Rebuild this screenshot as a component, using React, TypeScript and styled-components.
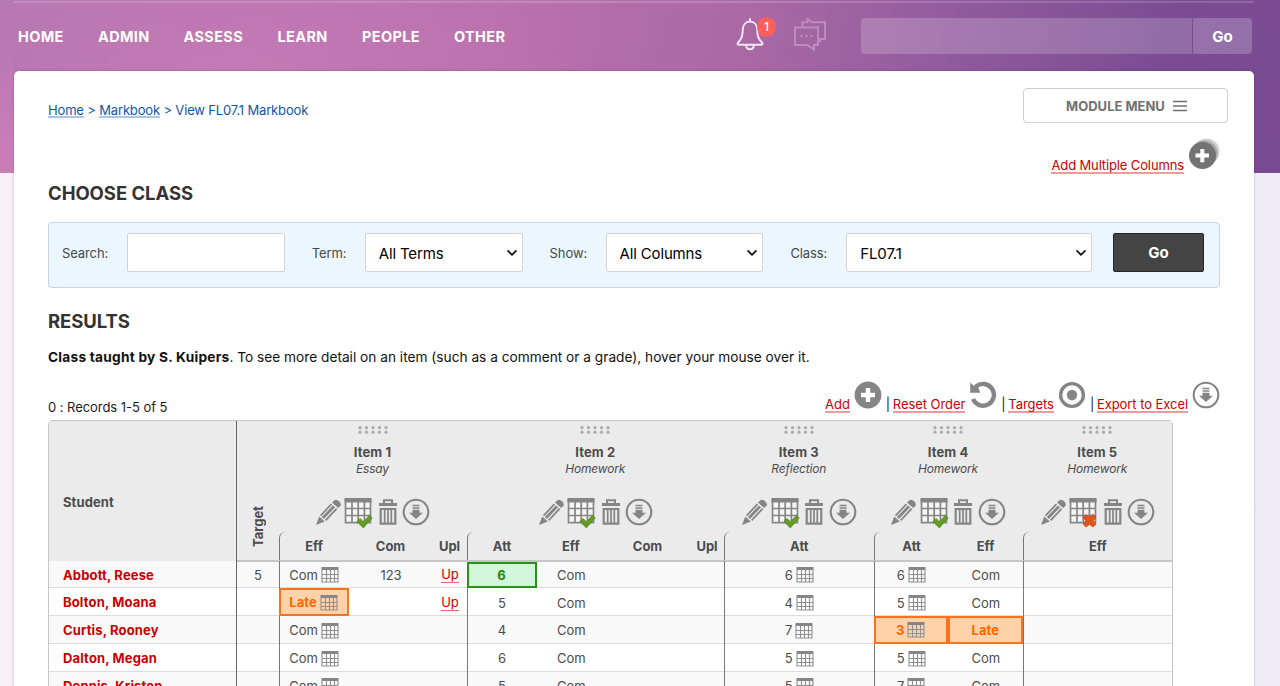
import React from 'react';
import styled, { createGlobalStyle, css } from 'styled-components';

const Global = createGlobalStyle`
  * { box-sizing: border-box; }
  html, body { margin: 0; padding: 0; }
  body { font-family: Inter, "Liberation Sans", sans-serif; font-size: 13px; color: #1b1b1b; overflow: hidden; }
`;

const Page = styled.div`
  height: 686px;
  overflow: hidden;
  padding: 1px 26px 0 14px;
  background:
    radial-gradient(ellipse 340px 190px at 230px 90px, rgba(203, 124, 184, 0.55), rgba(203, 124, 184, 0)) 0 0 / 100% 173px no-repeat,
    linear-gradient(0deg, rgba(208, 128, 185, 0.8) 0%, rgba(208, 128, 185, 0) 80%) 0 0 / 14px 173px no-repeat,
    linear-gradient(102deg, #b577b2 0%, #bb76b1 20%, #b971ad 40%, #a968a4 58%, #8f5a9d 74%, #7b4c94 89%, #784a92 100%) 0 0 / 100% 173px no-repeat,
    linear-gradient(90deg, #f9f0f7 0%, #f0ecf3 100%);
`;

const Header = styled.header`
  height: 70px;
  border-top: 2px solid rgba(255, 255, 255, 0.16);
  display: flex;
  align-items: center;
  padding: 0 2px 2px 4px;
`;

const Nav = styled.nav`
  display: flex;
  flex: 1;
`;

const NavItem = styled.a<{ $w: number }>`
  width: ${(p) => p.$w}px;
  color: #fff;
  font-size: 14.5px;
  font-weight: 700;
  letter-spacing: 0.35px;
  white-space: nowrap;
`;

const Alerts = styled.div`
  display: flex;
  width: 126px;
  height: 36px;
  gap: 28px;
`;

const BellWrap = styled.div`
  position: relative;
  width: 30px;
  height: 36px;
`;

const Badge = styled.span`
  position: absolute;
  left: 22px;
  top: -1px;
  width: 19px;
  height: 20px;
  border-radius: 10px;
  background: #fa5f5c;
  color: #fff;
  font-size: 12px;
  font-weight: 500;
  line-height: 20px;
  text-align: center;
`;

const GlobalSearch = styled.div`
  display: flex;
  width: 391px;
  height: 36px;
  border-radius: 4px;
  overflow: hidden;
`;

const SearchField = styled.div`
  flex: 1;
  background: rgba(255, 255, 255, 0.19);
  border-right: 1px solid rgba(110, 60, 140, 0.65);
`;

const SearchGo = styled.button`
  width: 59px;
  border: 0;
  padding: 0;
  background: rgba(255, 255, 255, 0.21);
  color: #fff;
  font: 700 15px Inter, sans-serif;
`;

const Main = styled.main`
  height: 620px;
  background: #fff;
  border-radius: 5px 5px 0 0;
  padding: 17px 26px 0 34px;
  box-shadow: 0 0 3px rgba(70, 20, 90, 0.28);
`;

const TopRow = styled.div`
  display: flex;
  justify-content: space-between;
  height: 36px;
`;

const Crumbs = styled.div`
  color: #0f56a8;
  font-size: 13px;
  line-height: 18px;
  padding-top: 13px;
  letter-spacing: -0.16px;
`;

const CrumbLink = styled.a`
  display: inline-block;
  height: 17px;
  line-height: 18px;
  border-bottom: 2px solid #a9c6e4;
  vertical-align: top;
`;

const ModuleMenu = styled.button`
  width: 205px;
  height: 35px;
  border: 1px solid #cfcfcf;
  border-radius: 4px;
  background: #fff;
  color: #707070;
  font: 700 13px Inter, sans-serif;
  display: flex;
  align-items: center;
  justify-content: center;
  gap: 8px;
  padding: 0 5px 0 7px;
`;

const AddColumns = styled.div`
  display: flex;
  justify-content: flex-end;
  height: 48px;
  padding: 14px 8px 0 0;
  gap: 4px;
`;

const RedLink = styled.a<{ $thin?: boolean }>`
  color: #c00;
  border-bottom: ${(p) => (p.$thin ? '1px solid #df6b6b' : '2px solid #ec9c9c')};
  line-height: 17px;
  height: 17px;
  white-space: nowrap;
`;

const LowLink = styled(RedLink)`
  margin-top: 19px;
  letter-spacing: -0.13px;
`;

const Heading = styled.h2`
  margin: 0;
  font-size: 18.5px;
  font-weight: 700;
  color: #333;
  line-height: 24px;
  height: 24px;
  letter-spacing: -0.05px;
`;

const ClassHeading = styled(Heading)`
  margin-top: 9px;
`;

const ResultsHeading = styled(Heading)`
  margin-top: 21px;
`;

const Filter = styled.form`
  margin: 17px 8px 0 0;
  height: 66px;
  border: 1px solid #ccd3d8;
  border-radius: 4px;
  background: #ebf6ff;
  padding: 10px 15px 0 13px;
  display: flex;
  font-size: 13px;
`;

const FieldLabel = styled.label<{ $w: number }>`
  width: ${(p) => p.$w}px;
  line-height: 40px;
  color: #484848;
  letter-spacing: -0.1px;
`;

const Field = styled.div<{ $w: number; $gap: number }>`
  width: ${(p) => p.$w}px;
  margin-right: ${(p) => p.$gap}px;
  height: 39px;
  background: #fff;
  border: 1px solid #d3d3d3;
  border-radius: 2px;
  padding: 1px 5px 0 13px;
  display: flex;
  align-items: center;
  justify-content: space-between;
  font-size: 15px;
  letter-spacing: -0.15px;
  color: #000;
`;

const GoButton = styled.button`
  width: 91px;
  height: 39px;
  border: 1px solid #252525;
  border-radius: 2px;
  background: #444;
  color: #fff;
  font: 700 15px Inter, sans-serif;
`;

const Taught = styled.p`
  margin: 14px 0 0;
  font-size: 13.7px;
  line-height: 20px;
  color: #111;
  b { font-weight: 700; letter-spacing: 0.24px; }
`;

const ListBar = styled.div`
  display: flex;
  justify-content: space-between;
  height: 53px;
  padding: 14px 8px 0 0;
`;

const Records = styled.span`
  padding-top: 17px;
  line-height: 18px;
  letter-spacing: -0.05px;
`;

const Actions = styled.div`
  display: flex;
`;

const ActionIcon = styled.span<{ $m: number }>`
  display: flex;
  height: 28px;
  margin-left: 4px;
  margin-right: ${(p) => p.$m}px;
`;

const ActionLink = styled(RedLink)`
  margin-top: 14px;
  height: 18px;
  line-height: 18px;
  letter-spacing: -0.06px;
`;

const Bar = styled.span`
  width: 7px;
  line-height: 18px;
  margin-top: 14px;
`;

const Table = styled.div`
  width: 1125px;
  border: 1px solid #c6c6c6;
  border-radius: 4px 4px 0 0;
  color: #4c4c4c;
`;

const HeadRow = styled.div`
  display: grid;
  grid-template-columns: 187.5px 42px 188px 257.5px 149.5px 149px 149.5px;
  height: 139.5px;
  background: #ebebeb;
  font-weight: 700;
`;

const StudentHead = styled.div`
  padding: 71px 14px 0;
  line-height: 20px;
  border-right: 1px solid #666;
  letter-spacing: 0.1px;
`;

const TargetHead = styled.div`
  display: flex;
  align-items: flex-end;
  justify-content: center;
  padding-bottom: 13px;
  border-bottom: 2px solid #c6c6c6;
  span { writing-mode: vertical-rl; transform: rotate(180deg); line-height: 18px; }
`;

const ItemHead = styled.div`
  display: flex;
  flex-direction: column;
  align-items: center;
  border-bottom: 2px solid #c6c6c6;
  padding-top: 4.5px;
`;

const ItemName = styled.div`
  margin-top: 9.5px;
  line-height: 18px;
  letter-spacing: 0.1px;
`;

const ItemType = styled.div`
  font-size: 12px;
  font-weight: 400;
  font-style: italic;
  letter-spacing: -0.2px;
  line-height: 15px;
`;

const Tools = styled.div`
  display: flex;
  align-items: center;
  gap: 1.5px;
  height: 30px;
  margin-top: 21px;
`;

const SubHeads = styled.div<{ $cols: string }>`
  display: grid;
  grid-template-columns: ${(p) => p.$cols};
  align-self: stretch;
  flex: 1;
  margin-top: 5px;
  border-left: 1px solid #777;
  border-top-left-radius: 6px;
  text-align: center;
  line-height: 28px;
`;

const Row = styled.div<{ $alt: boolean }>`
  display: grid;
  grid-template-columns: 187.5px 42px 70px 84px 34px 70px 68.5px 85px 34px 149.5px 74.5px 74.5px 149.5px;
  height: 27.8px;
  border-bottom: 1px solid #dcdcdc;
  background: ${(p) => (p.$alt ? '#f9f9f9' : '#fff')};
`;

const NameCell = styled.div`
  color: #c00;
  font-weight: 700;
  padding-left: 14px;
  line-height: 28px;
  border-right: 1px solid #666;
  letter-spacing: 0.15px;
`;

const flags = {
  good: css`background: #d4f6dc; border: 2px solid #269218; color: #1f8a00; font-weight: 700; margin: 1px 0; padding: 0;`,
  late: css`background: #ffd2a9; border: 2px solid #f8731c; color: #ff6600; font-weight: 700; margin: 0 0 0.5px; padding: 0;`,
};

const Cell = styled.div<{ $edge?: boolean; $flag?: 'good' | 'late' }>`
  display: flex;
  align-items: center;
  justify-content: center;
  gap: 3px;
  padding-top: 0.5px;
  border-left: ${(p) => (p.$edge ? '1px solid #777' : '1px solid transparent')};
  ${(p) => p.$flag && flags[p.$flag]}
`;

const G = '#858585';

const Bell = () => (
  <svg width="30" height="36" viewBox="0 0 30 36" fill="none" stroke="#f3e6f3" strokeWidth="2" strokeLinejoin="round" strokeLinecap="round">
    <path d="M15 1v2.500M15 3.500C10.500 3.500 7.700 7.300 7.700 12.500c0 5-1 8.500-4.200 11.500C2 25.500 2.300 26.800 3.700 26.800h22.600c1.400 0 1.700-1.300.2-2.800C23.300 21 22.300 17.500 22.300 12.500 22.300 7.300 19.500 3.500 15 3.500z" />
    <path d="M11.200 27.200c0 2.300 1.500 4 3.800 4s3.800-1.700 3.800-4" />
  </svg>
);

const Chat = () => (
  <svg width="34" height="36" viewBox="0 0 34 36" fill="none" stroke="#bb8dbe" strokeWidth="2">
    <path d="M9.500 9V4.300h5V1l5 3.300H32V21h-5v3" />
    <path d="M2 9.500h23V27h-4v4.800L14.500 27H2z" />
    <path d="M7.300 18h2.200M12.400 18h2.200M17.500 18h2.200" />
  </svg>
);

const Menu = () => (
  <svg width="14" height="12" viewBox="0 0 14 12" stroke="#707070" strokeWidth="1.300">
    <path d="M0 1.500h14M0 6h14M0 10.500h14" />
  </svg>
);

const Chevron = () => (
  <svg width="10" height="8" viewBox="0 0 10 8" fill="none" stroke="#111" strokeWidth="1.700" strokeLinecap="round" strokeLinejoin="round">
    <path d="M1 1.800l4 4 4-4" />
  </svg>
);

const MultiPlus = () => (
  <svg width="32" height="32" viewBox="0 0 32 32">
    <circle cx="18.500" cy="13.500" r="13" fill="#d0d0d0" />
    <circle cx="16.500" cy="15.500" r="13" fill="#a6a6a6" />
    <circle cx="14.500" cy="17.500" r="13.500" fill="#737373" />
    <path d="M12.300 11h4v4.500H21v4h-4.700v4.700h-4v-4.700H7.500v-4h4.800z" fill="#fff" />
  </svg>
);

const Plus = () => (
  <svg width="28" height="28" viewBox="0 0 28 28">
    <circle cx="14" cy="14" r="13.400" fill={G} />
    <path d="M11.800 7h4.400v4.800H21v4.400h-4.800V21h-4.400v-4.800H7v-4.400h4.800z" fill="#fff" />
  </svg>
);

const Reset = () => (
  <svg width="28" height="28" viewBox="0 0 28 28">
    <path d="M7 5.500A10.900 10.900 0 1 1 4 18" fill="none" stroke={G} strokeWidth="4.400" />
    <path d="M1.200 1.500l3.600 3.200L8 3l3.300 8.700H1.200z" fill={G} />
  </svg>
);

const Target = () => (
  <svg width="28" height="28" viewBox="0 0 28 28">
    <circle cx="14" cy="14" r="11.400" fill="none" stroke={G} strokeWidth="3.400" />
    <circle cx="14" cy="14" r="5.200" fill={G} />
  </svg>
);

const Down = () => (
  <svg width="28" height="28" viewBox="0 0 28 28">
    <circle cx="14" cy="14" r="12.300" fill="none" stroke={G} strokeWidth="2.100" />
    <path d="M10.500 7.500h7M10.500 10h7" stroke={G} strokeWidth="1.500" />
    <path d="M10.500 11.700h7v3H21L14 21l-7-6.300h3.500z" fill={G} />
  </svg>
);

const Pencil = () => (
  <svg width="28" height="28" viewBox="0 0 28 28">
    <path d="M19.500 2.200c2.200-2.200 8 3 6 5.500l-2.300 2.400-6.200-5.600z" fill={G} />
    <path d="M15.800 5.500l1.300 1.200L6.300 18.300l-1.300-1.200zM18 7.400l2 1.900L8.900 20.900l-2-1.900zM21 10l1.300 1.200L11.300 22.900 10 21.700z" fill={G} />
    <path d="M4.300 18.500l5.500 5L1 27z" fill={G} />
  </svg>
);

const MarkGrid = ({ done }: { done: boolean }) => (
  <svg width="29" height="32" viewBox="0.500 0 29 32">
    <path d="M1 2.500h27v25H1z" fill="#f6f6f6" />
    <path d="M2 3v23.700h25V3M8.500 6v21M14.700 6v21M20.900 6v21M2 12.500h25M2 19.500h25" fill="none" stroke={G} strokeWidth="1.700" />
    <path d="M1 2h27v4.500H1z" fill={G} />
    {done ? (
      <path d="M13.300 25.500l3.500-3 3 3.200 6.200-6.500 2.800 2.700-9 10z" fill="#659b25" stroke="#4b7b16" strokeWidth=".6" />
    ) : (
      <path d="M14.500 21.300l3-2.800 3.500 2.500 3.500-2.800 3 2.800-2.500 3.700 2.500 3.500-3 2.800-3.500-2.500-3.500 2.500-3-2.800 2.500-3.500z" fill="#e2541b" stroke="#c24413" strokeWidth=".6" />
    )}
  </svg>
);

const SmallGrid = () => (
  <svg width="18" height="17" viewBox="0 0 18 17">
    <path d="M1 4v12h16V4M5.500 4v12M9.500 4v12M13.500 4v12M1 8.500h16M1 12.500h16" fill="none" stroke="#909090" strokeWidth="1.100" />
    <path d="M.500 1h17v3H.500z" fill={G} />
  </svg>
);

const Trash = () => (
  <svg width="26" height="28" viewBox="1 0 26 28">
    <path d="M10 5V2.200h8V5" fill="none" stroke={G} strokeWidth="2" />
    <path d="M5 5h18v3H5z" fill={G} />
    <path d="M6.700 11h14.600v14.600H6.700z" fill="none" stroke={G} strokeWidth="2.200" />
    <path d="M10.700 12v13M14 12v13M17.300 12v13" stroke={G} strokeWidth="1.700" />
  </svg>
);

const Dots = () => (
  <svg width="30" height="8" viewBox="0 0 30 8" fill="#aaa">
    {[2, 8.500, 15, 21.500, 28].map((x) => (
      <React.Fragment key={x}>
        <circle cx={x} cy="1.700" r="1.600" />
        <circle cx={x} cy="6.200" r="1.600" />
      </React.Fragment>
    ))}
  </svg>
);

const nav: [string, number][] = [['HOME', 80], ['ADMIN', 85.5], ['ASSESS', 94], ['LEARN', 84.5], ['PEOPLE', 92], ['OTHER', 60]];

const items = [
  { name: 'Item 1', type: 'Essay', cols: '69px 84px 34px', subs: ['Eff', 'Com', 'Upl'], done: true },
  { name: 'Item 2', type: 'Homework', cols: '69px 68.5px 85px 34px', subs: ['Att', 'Eff', 'Com', 'Upl'], done: true },
  { name: 'Item 3', type: 'Reflection', cols: '1fr', subs: ['Att'], done: true },
  { name: 'Item 4', type: 'Homework', cols: '1fr 1fr', subs: ['Att', 'Eff'], done: true },
  { name: 'Item 5', type: 'Homework', cols: '1fr', subs: ['Eff'], done: false },
];

type Student = { name: string; target?: string; eff1: string; com1?: string; up?: boolean; att2: string; att3: string; att4: string; eff4: string };

const students: Student[] = [
  { name: 'Abbott, Reese', target: '5', eff1: 'Com', com1: '123', up: true, att2: '6', att3: '6', att4: '6', eff4: 'Com' },
  { name: 'Bolton, Moana', eff1: 'Late', up: true, att2: '5', att3: '4', att4: '5', eff4: 'Com' },
  { name: 'Curtis, Rooney', eff1: 'Com', att2: '4', att3: '7', att4: '3', eff4: 'Late' },
  { name: 'Dalton, Megan', eff1: 'Com', att2: '6', att3: '5', att4: '5', eff4: 'Com' },
  { name: 'Dennis, Kristen', eff1: 'Com', att2: '5', att3: '5', att4: '7', eff4: 'Com' },
];

export default function App() {
  return (
    <Page>
      <Global />
      <Header>
        <Nav>{nav.map(([t, w]) => <NavItem key={t} $w={w}>{t}</NavItem>)}</Nav>
        <Alerts>
          <BellWrap><Bell /><Badge>1</Badge></BellWrap>
          <Chat />
        </Alerts>
        <GlobalSearch><SearchField /><SearchGo>Go</SearchGo></GlobalSearch>
      </Header>
      <Main>
        <TopRow>
          <Crumbs><CrumbLink>Home</CrumbLink> &gt; <CrumbLink>Markbook</CrumbLink> &gt; View FL07.1 Markbook</Crumbs>
          <ModuleMenu>MODULE MENU <Menu /></ModuleMenu>
        </TopRow>
        <AddColumns><LowLink>Add Multiple Columns</LowLink><MultiPlus /></AddColumns>
        <ClassHeading>CHOOSE CLASS</ClassHeading>
        <Filter>
          <FieldLabel $w={65}>Search:</FieldLabel>
          <Field $w={158} $gap={27} />
          <FieldLabel $w={53}>Term:</FieldLabel>
          <Field $w={158} $gap={27}>All Terms<Chevron /></Field>
          <FieldLabel $w={56}>Show:</FieldLabel>
          <Field $w={158} $gap={27}>All Columns<Chevron /></Field>
          <FieldLabel $w={56}>Class:</FieldLabel>
          <Field $w={246} $gap={21}>FL07.1<Chevron /></Field>
          <GoButton type="button">Go</GoButton>
        </Filter>
        <ResultsHeading>RESULTS</ResultsHeading>
        <Taught><b>Class taught by S. Kuipers</b>. To see more detail on an item (such as a comment or a grade), hover your mouse over it.</Taught>
        <ListBar>
          <Records>0 : Records 1-5 of 5</Records>
          <Actions>
            <ActionLink>Add</ActionLink><ActionIcon $m={4}><Plus /></ActionIcon><Bar>|</Bar>
            <ActionLink>Reset Order</ActionLink><ActionIcon $m={4}><Reset /></ActionIcon><Bar>|</Bar>
            <ActionLink>Targets</ActionLink><ActionIcon $m={4}><Target /></ActionIcon><Bar>|</Bar>
            <ActionLink>Export to Excel</ActionLink><ActionIcon $m={0}><Down /></ActionIcon>
          </Actions>
        </ListBar>
        <Table>
          <HeadRow>
            <StudentHead>Student</StudentHead>
            <TargetHead><span>Target</span></TargetHead>
            {items.map((it) => (
              <ItemHead key={it.name}>
                <Dots />
                <ItemName>{it.name}</ItemName>
                <ItemType>{it.type}</ItemType>
                <Tools><Pencil /><MarkGrid done={it.done} /><Trash /><Down /></Tools>
                <SubHeads $cols={it.cols}>{it.subs.map((s) => <span key={s}>{s}</span>)}</SubHeads>
              </ItemHead>
            ))}
          </HeadRow>
          {students.map((s, i) => (
            <Row key={s.name} $alt={i % 2 === 0}>
              <NameCell>{s.name}</NameCell>
              <Cell>{s.target}</Cell>
              <Cell $edge $flag={s.eff1 === 'Late' ? 'late' : undefined}>{s.eff1}<SmallGrid /></Cell>
              <Cell>{s.com1}</Cell>
              <Cell>{s.up && <RedLink $thin>Up</RedLink>}</Cell>
              <Cell $edge $flag={i === 0 ? 'good' : undefined}>{s.att2}</Cell>
              <Cell>Com</Cell>
              <Cell />
              <Cell />
              <Cell $edge>{s.att3}<SmallGrid /></Cell>
              <Cell $edge $flag={s.att4 === '3' ? 'late' : undefined}>{s.att4}<SmallGrid /></Cell>
              <Cell $flag={s.eff4 === 'Late' ? 'late' : undefined}>{s.eff4}</Cell>
              <Cell $edge />
            </Row>
          ))}
        </Table>
      </Main>
    </Page>
  );
}
